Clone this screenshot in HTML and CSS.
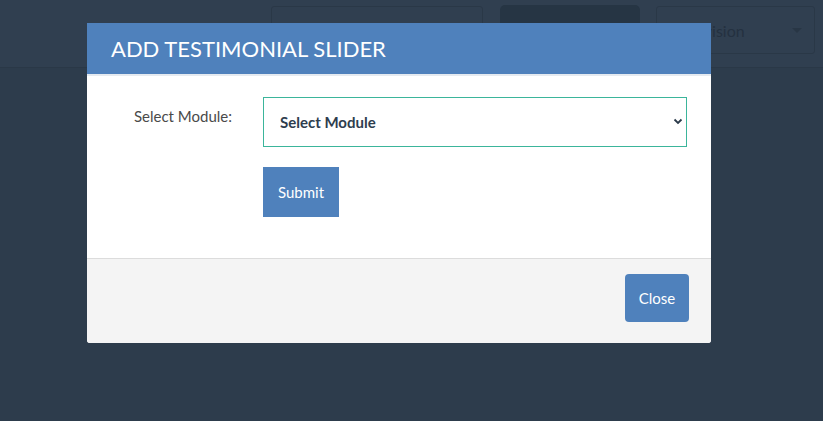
FILE: index.html
```html
<!DOCTYPE html>
<html>
<head>
<meta charset="utf-8">
<link rel="stylesheet" href="styles.css">
</head>
<body>
<div class="page">
  <header class="topbar">
    <div class="box search"></div>
    <div class="darkbtn"></div>
    <div class="box division"><span>Division</span><span class="caret"></span></div>
  </header>
  <main class="content"></main>
</div>

<div class="modal">
  <div class="modal-header">ADD TESTIMONIAL SLIDER</div>
  <div class="modal-body">
    <div class="form-row">
      <label class="label" for="mod">Select Module:</label>
      <div class="select-wrap">
        <select id="mod" class="select"><option>Select Module</option></select>
        <svg class="chev" width="10" height="7" viewBox="0 0 10 7"><path d="M1.5 1.5 L5 5 L8.5 1.5" fill="none" stroke="#2b3a4a" stroke-width="1.8"/></svg>
      </div>
    </div>
    <div class="form-row">
      <span class="label"></span>
      <button class="btn submit">Submit</button>
    </div>
  </div>
  <div class="modal-footer">
    <button class="btn close">Close</button>
  </div>
</div>
</body>
</html>
```

FILE: styles.css
```css
* { box-sizing: border-box; }
html, body { margin: 0; padding: 0; }
body {
  width: 823px;
  height: 421px;
  overflow: hidden;
  background: #2d3c4c;
  font-family: Lato, "Open Sans", sans-serif;
  position: relative;
}
.page { width: 100%; height: 100%; }
.topbar {
  height: 68px;
  background: #303f50;
  border-bottom: 1px solid #2a3847;
  display: flex;
  align-items: flex-start;
  padding-top: 5px;
}
.box {
  border: 1px solid #2a3847;
  border-radius: 3px;
  height: 48px;
  margin-top: 1px;
}
.search { margin-left: 271px; width: 212px; }
.darkbtn {
  margin-left: 17px;
  width: 140px;
  height: 40px;
  background: #263544;
  border-radius: 5px;
}
.division {
  margin-left: 16px;
  width: 159px;
  display: flex;
  align-items: center;
  justify-content: space-between;
  padding: 0 12px 0 31px;
  color: #243140;
  font-size: 16px;
}
.caret {
  width: 0; height: 0;
  border-left: 5px solid transparent;
  border-right: 5px solid transparent;
  border-top: 5px solid #283645;
}

.modal {
  position: absolute;
  left: 87px;
  top: 23px;
  width: 624px;
  background: #fff;
  border-radius: 0 0 3px 3px;
  overflow: hidden;
}
.modal-header {
  height: 53px;
  background: #4f81bc;
  border-bottom: 2px solid #e5eaf0;
  color: #fff;
  font-size: 22px;
  line-height: 51px;
  padding-left: 24px;
}
.modal-body {
  padding: 21px 24px 41px 24px;
  display: flex;
  flex-direction: column;
  gap: 20px;
}
.form-row { display: flex; align-items: flex-start; }
.label {
  width: 152px;
  flex: none;
  text-align: right;
  padding-right: 31px;
  font-size: 15px;
  color: #4a4a4a;
  line-height: 38px;
}
.select-wrap { position: relative; width: 424px; }
.select {
  appearance: none;
  -webkit-appearance: none;
  width: 424px;
  height: 50px;
  border: 1px solid #3bb59b;
  background: #fff;
  border-radius: 0;
  padding: 0 16px;
  font-family: Lato, sans-serif;
  font-weight: 700;
  font-size: 15px;
  color: #2e3d4e;
  outline: none;
}
.chev { position: absolute; right: 4px; top: 21px; }
.btn {
  border: none;
  background: #4f81bc;
  color: #fff;
  font-family: Lato, sans-serif;
  font-size: 15px;
}
.submit { width: 76px; height: 50px; border-radius: 0; }
.modal-footer {
  background: #f4f4f4;
  border-top: 1px solid #dcdcdc;
  height: 85px;
  display: flex;
  justify-content: flex-end;
  align-items: flex-start;
  padding: 15px 22px 0 0;
}
.close { width: 64px; height: 48px; border-radius: 4px; }
```
